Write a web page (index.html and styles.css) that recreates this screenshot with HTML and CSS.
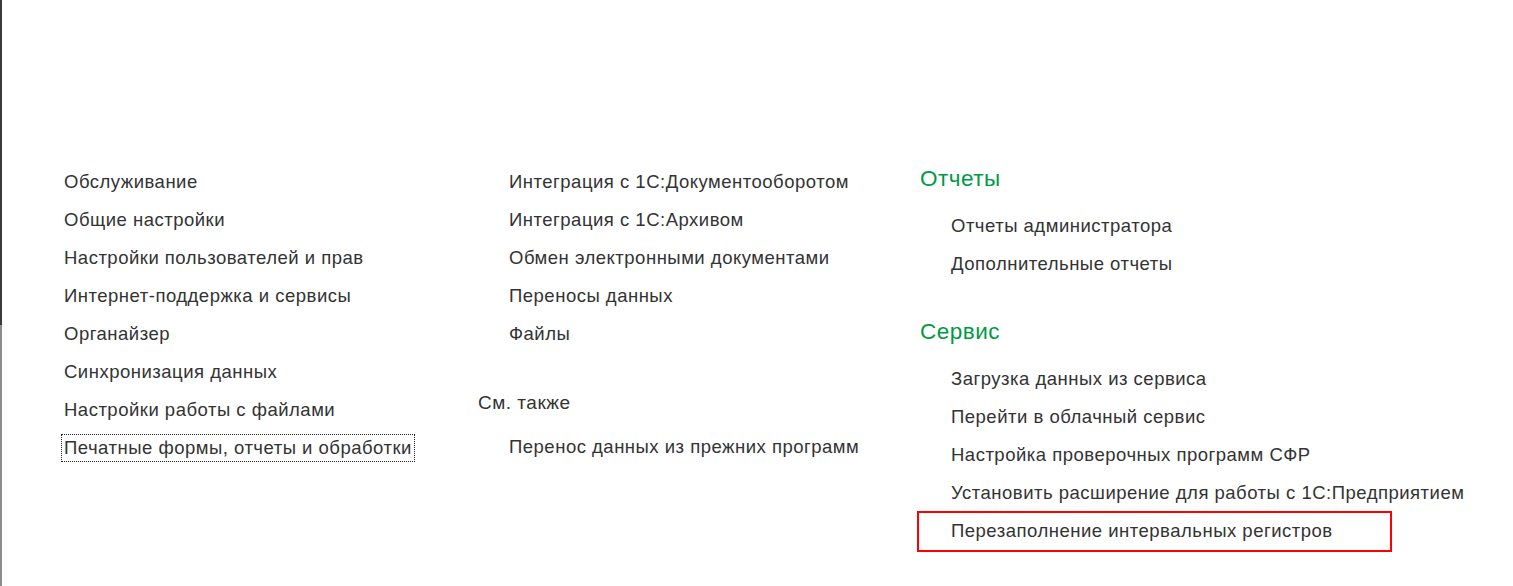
FILE: index.html
```html
<!DOCTYPE html>
<html lang="ru">
<head>
<meta charset="utf-8">
<title>Администрирование</title>
<link rel="stylesheet" href="styles.css">
</head>
<body>
<div class="frame"></div>
<main class="panel">
  <section class="col col-1">
    <a class="item">Обслуживание</a>
    <a class="item">Общие настройки</a>
    <a class="item">Настройки пользователей и прав</a>
    <a class="item">Интернет-поддержка и сервисы</a>
    <a class="item">Органайзер</a>
    <a class="item">Синхронизация данных</a>
    <a class="item">Настройки работы с файлами</a>
    <a class="item focused">Печатные формы, отчеты и обработки</a>
  </section>
  <section class="col col-2">
    <div class="group">
      <a class="item">Интеграция с 1С:Документооборотом</a>
      <a class="item">Интеграция с 1С:Архивом</a>
      <a class="item">Обмен электронными документами</a>
      <a class="item">Переносы данных</a>
      <a class="item">Файлы</a>
    </div>
    <div class="group see-also">
      <h3 class="plain-heading">См. также</h3>
      <a class="item">Перенос данных из прежних программ</a>
    </div>
  </section>
  <section class="col col-3">
    <div class="group">
      <h2 class="green-heading">Отчеты</h2>
      <a class="item">Отчеты администратора</a>
      <a class="item">Дополнительные отчеты</a>
    </div>
    <div class="group service">
      <h2 class="green-heading">Сервис</h2>
      <a class="item">Загрузка данных из сервиса</a>
      <a class="item">Перейти в облачный сервис</a>
      <a class="item">Настройка проверочных программ СФР</a>
      <a class="item">Установить расширение для работы с 1С:Предприятием</a>
      <a class="item marked">Перезаполнение интервальных регистров</a>
    </div>
  </section>
</main>
</body>
</html>
```
FILE: styles.css
```css
html, body {
  margin: 0;
  padding: 0;
  background: #ffffff;
}

body {
  height: 586px;
  overflow: hidden;
  font-family: "Liberation Sans", Arial, sans-serif;
  font-size: 18.5px;
  letter-spacing: 0.5px;
  color: #333333;
}

.frame {
  position: fixed;
  left: 0;
  top: 0;
  width: 2px;
  height: 100%;
  background: linear-gradient(#3a3a3a 0, #3a3a3a 325px, #8c8c8c 325px, #8c8c8c 100%);
}

.panel {
  display: grid;
  grid-template-columns: 417px 442px 1fr;
  padding: 164px 0 0 61px;
}

.col {
  display: flex;
  flex-direction: column;
  align-items: flex-start;
}

.col-1, .col-2 {
  padding-top: 4px;
}

.col-3 {
  padding-top: 1px;
}

.group {
  display: flex;
  flex-direction: column;
  align-items: flex-start;
}

.item {
  position: relative;
  display: block;
  height: 26px;
  line-height: 26px;
  padding: 0 2px;
  margin-bottom: 10px;
  border: 1px solid transparent;
  white-space: nowrap;
  cursor: pointer;
}

.col-2 .item, .col-3 .item {
  margin-left: 28px;
}

.item.focused {
  border: 1px dotted #222222;
}

.see-also {
  margin-top: 31px;
}

.plain-heading {
  margin: 0 0 16px 0;
  height: 28px;
  line-height: 28px;
  font-size: 19px;
  font-weight: normal;
  color: #333333;
}

.green-heading {
  margin: 0 0 19px 0;
  height: 28px;
  line-height: 28px;
  font-size: 22.5px;
  font-weight: normal;
  color: #009a44;
}

.service {
  margin-top: 30px;
}

.item.marked::after {
  content: "";
  position: absolute;
  left: -32px;
  top: -7px;
  width: 475px;
  height: 41px;
  border: 2px solid #ff0000;
  box-sizing: border-box;
  pointer-events: none;
}
```
